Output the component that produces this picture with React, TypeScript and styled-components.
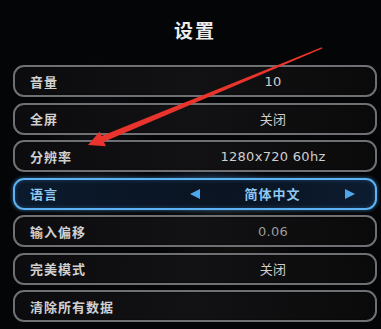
import React from "react";
import styled, { createGlobalStyle } from "styled-components";

interface Setting {
  label: string;
  value?: string;
  dim?: boolean;
  active?: boolean;
}

const settings: Setting[] = [
  { label: "音量", value: "10" },
  { label: "全屏", value: "关闭" },
  { label: "分辨率", value: "1280x720 60hz" },
  { label: "语言", value: "简体中文", active: true },
  { label: "输入偏移", value: "0.06", dim: true },
  { label: "完美模式", value: "关闭" },
  { label: "清除所有数据" },
];

const App: React.FC = () => {
  return (
    <>
      <GlobalStyle />
      <Screen>
        <Title>设置</Title>
        <List>
          {settings.map((s) => (
            <Row key={s.label} $active={s.active}>
              <Label $active={s.active}>{s.label}</Label>
              {s.active ? (
                <Selector>
                  <Triangle $dir="left" />
                  <ActiveValue>{s.value}</ActiveValue>
                  <Triangle $dir="right" />
                </Selector>
              ) : (
                <Value $dim={s.dim}>{s.value}</Value>
              )}
            </Row>
          ))}
        </List>
        <Pointer viewBox="0 0 381 329" width="381" height="329">
          <polygon
            points="321.8,47.3 101.6,136.1 99.7,131.5 88,145 105.9,146.3 103.9,141.7 322.3,48.6"
            fill="#e8342c"
          />
        </Pointer>
      </Screen>
    </>
  );
};

export default App;

//MARK: - Styled Components

const GlobalStyle = createGlobalStyle`
  html, body {
    margin: 0;
    padding: 0;
    background: #040507;
  }
  body {
    font-family: "Noto Sans CJK SC", "Noto Sans", sans-serif;
  }
`;

const Screen = styled.div`
  position: relative;
  width: 381px;
  height: 329px;
  overflow: hidden;
  background:
    radial-gradient(ellipse 60px 90px at 95px 150px, rgba(120, 120, 130, 0.12), transparent),
    radial-gradient(ellipse 80px 60px at 230px 230px, rgba(140, 120, 90, 0.12), transparent),
    radial-gradient(ellipse 60px 40px at 210px 180px, rgba(80, 120, 200, 0.15), transparent),
    #040507;
`;

const Title = styled.h1`
  margin: 0;
  height: 65px;
  display: flex;
  align-items: center;
  justify-content: center;
  padding-left: 9px;
  box-sizing: border-box;
  padding-bottom: 6px;
  font-size: 19px;
  font-weight: 700;
  letter-spacing: 2px;
  color: #ececec;
`;

const List = styled.div`
  display: flex;
  flex-direction: column;
  gap: 5.5px;
  padding: 0 4px 0 13px;
`;

const Row = styled.div<{ $active?: boolean }>`
  height: 32px;
  box-sizing: border-box;
  display: grid;
  grid-template-columns: 160px 1fr;
  align-items: center;
  border-radius: 11px;
  border: 2px solid ${(p) => (p.$active ? "#5cb2f2" : "#6f7074")};
  background: ${(p) =>
    p.$active
      ? "linear-gradient(90deg, #0b1a2c, #0a1422 60%, #0c1c30)"
      : "linear-gradient(90deg, #0c0c0e, #121214 50%, #0a0a0b)"};
  box-shadow: ${(p) =>
    p.$active
      ? "0 0 4px rgba(80, 170, 240, 0.6), inset 0 0 4px rgba(80, 170, 240, 0.3)"
      : "inset 0 0 2px rgba(0, 0, 0, 0.8)"};
`;

const Label = styled.span<{ $active?: boolean }>`
  padding-left: 15px;
  font-size: 13px;
  font-weight: 700;
  letter-spacing: 1px;
  color: ${(p) => (p.$active ? "#8fc8f2" : "#d0d0d0")};
`;

const Value = styled.span<{ $dim?: boolean }>`
  text-align: center;
  padding-right: 4px;
  font-family: "DejaVu Sans", "Noto Sans CJK SC", sans-serif;
  font-size: 13px;
  letter-spacing: 0.3px;
  color: ${(p) => (p.$dim ? "#9a9a9a" : "#cfcfcf")};
`;

const Selector = styled.div`
  display: flex;
  align-items: center;
  justify-content: space-between;
  padding: 0 20px 0 15px;
`;

const ActiveValue = styled.span`
  font-size: 13px;
  font-weight: 700;
  letter-spacing: 1px;
  color: #8fc8f2;
`;

const Triangle = styled.span<{ $dir: "left" | "right" }>`
  width: 0;
  height: 0;
  border-top: 5px solid transparent;
  border-bottom: 5px solid transparent;
  ${(p) =>
    p.$dir === "left"
      ? "border-right: 10px solid #4ea6ec;"
      : "border-left: 10px solid #4ea6ec;"}
`;

const Pointer = styled.svg`
  position: absolute;
  left: 0;
  top: 0;
  pointer-events: none;
`;
